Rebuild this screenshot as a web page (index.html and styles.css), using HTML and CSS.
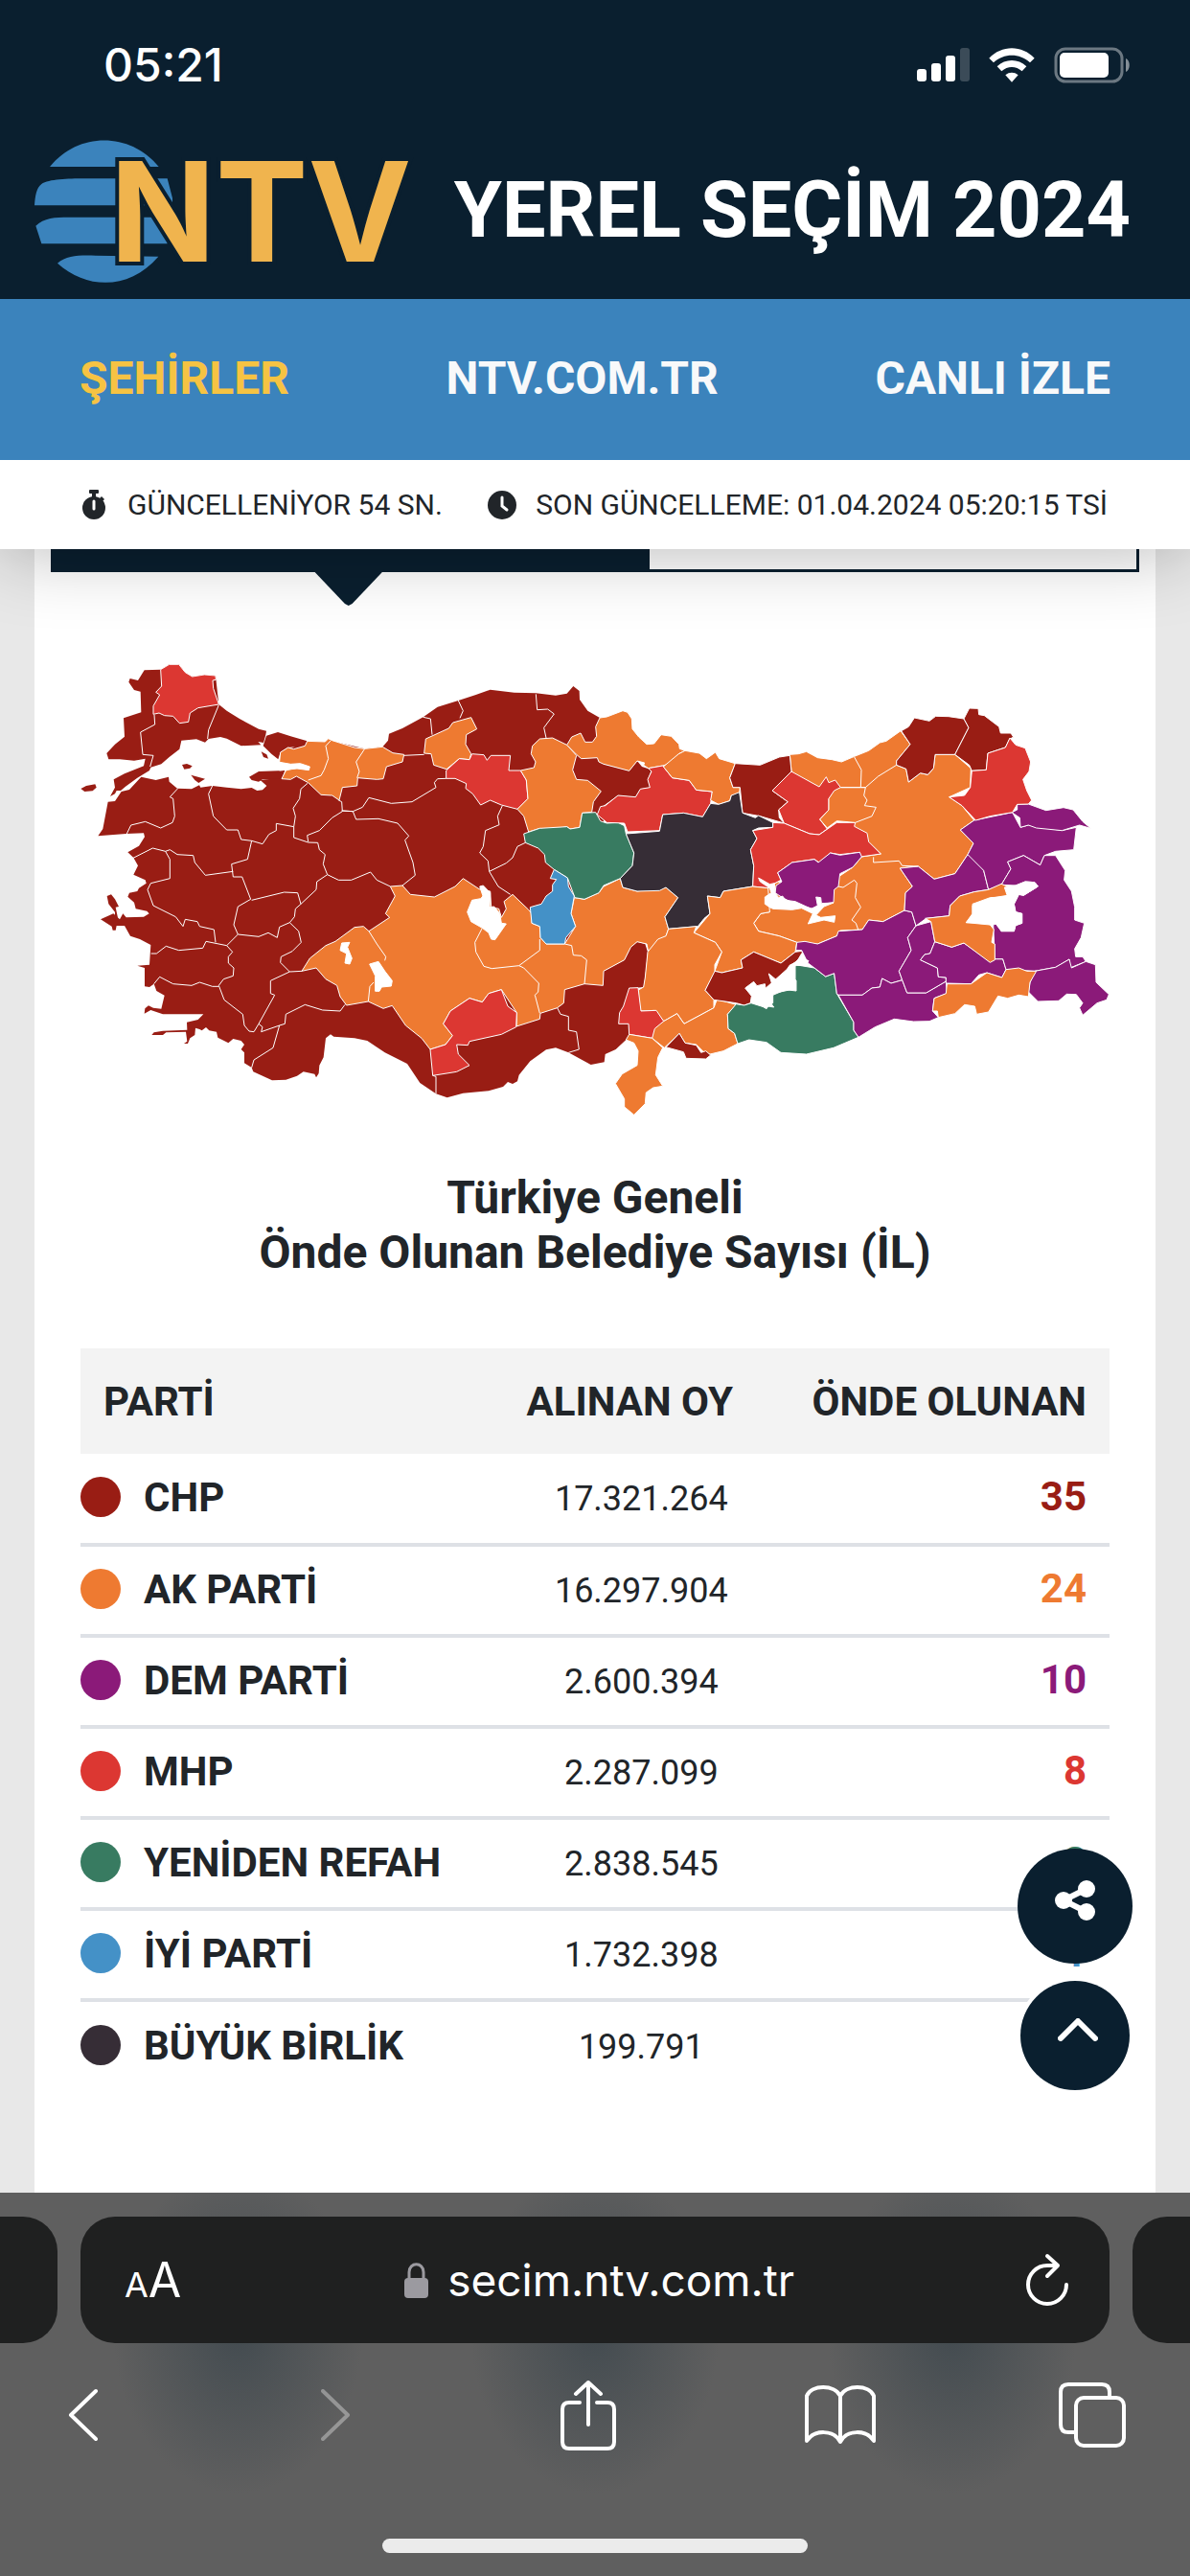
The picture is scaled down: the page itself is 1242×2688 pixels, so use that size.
FILE: index.html
```html
<!DOCTYPE html>
<html lang="tr">
<head>
    <meta charset="UTF-8">
    <meta name="viewport" content="width=device-width, initial-scale=1.0">
    <title>NTV Yerel Seçim 2024</title>
    <link rel="stylesheet" href="styles.css">
</head>
<body>

<header class="header">
    <div class="status">
        <span class="time">05:21</span>
        <div class="status-icons">
            <svg width="55" height="36" viewBox="0 0 55 36" fill="#fff">
                <rect x="0" y="22" width="10" height="13" rx="3"/>
                <rect x="15" y="16" width="10" height="19" rx="3"/>
                <rect x="30" y="8" width="10" height="27" rx="3"/>
                <rect x="45" y="0" width="10" height="35" rx="3" opacity=".2"/>
            </svg>
            <svg width="48" height="36" viewBox="0 0 144 108" fill="#fff">
                <path d="M1 32C40-10 104-10 143 32L129 46C97 16 47 16 15 46Z"/>
                <path d="M26 58C52 33 92 33 118 58L104 73C85 56 59 56 40 73Z"/>
                <path d="M52 85C64 75 80 75 92 85L72 107Z"/>
            </svg>
            <svg width="80" height="38" viewBox="0 0 80 38">
                <rect x="2" y="2" width="69" height="34" rx="10" fill="none" stroke="#fff" stroke-opacity=".4" stroke-width="3"/>
                <rect x="6" y="6" width="51" height="26" rx="5" fill="#fff"/>
                <path d="M75 12C80 14 80 24 75 26Z" fill="#fff" opacity=".5"/>
            </svg>
        </div>
    </div>
    <div class="brand">
        <a href="#" class="logo" aria-label="NTV">
            <svg viewBox="48 50 1170 444">
                <g fill="#3b83bc">
                    <path d="M96 134C185 24 347 24 437 134Z"/>
                    <path d="M48 255C50 225 54 200 70 188C100 168 190 171 250 171H464L480 232V255Z"/>
                    <path d="M70 375L52 319C80 290 125 292 170 292H420L471 346L464 375Z"/>
                    <path d="M120 436C150 410 190 411 240 412L436 415C345 520 215 520 120 436Z"/>
                </g>
                <text class="logo-text" x="284" y="432">NTV</text>
            </svg>
        </a>
        <h1 class="site-title">YEREL SEÇİM 2024</h1>
    </div>
</header>

<nav class="nav">
    <a href="#" class="active">ŞEHİRLER</a>
    <a href="#">NTV.COM.TR</a>
    <a href="#">CANLI İZLE</a>
</nav>

<div class="info">
    <span class="info-item">
        <svg width="30" height="32" viewBox="0 0 30 32" fill="#212529">
            <rect x="10" y="0" width="10" height="4" rx="1"/>
            <rect x="13" y="2" width="4" height="6"/>
            <path d="M23 7L26 10L24 12L21 9Z"/>
            <circle cx="15" cy="19" r="12"/>
            <path d="M15 12V20" stroke="#fff" stroke-width="3" stroke-linecap="round"/>
        </svg>
        GÜNCELLENİYOR 54 SN.
    </span>
    <span class="info-item">
        <svg width="30" height="30" viewBox="0 0 30 30">
            <circle cx="15" cy="15" r="15" fill="#212529"/>
            <path d="M15 7V16L20 20" fill="none" stroke="#fff" stroke-width="3" stroke-linecap="round"/>
        </svg>
        SON GÜNCELLEME: 01.04.2024 05:20:15 TSİ
    </span>
</div>

<main class="main">
    <div class="card">
        <div class="tabs">
            <span class="tab tab-active"></span>
            <span class="tab"></span>
        </div>

        <!-- Map of the provinces, filled with the colour of the leading party -->
        <svg class="map" viewBox="42 60 3222 1440" role="img" aria-label="Türkiye haritası">
            <g class="chp land">
                <path d="M193 125L197 114 222 120 242 88 293 86 320 70 350 70 370 95 392 108 430 102 465 105 475 195 500 215 540 240 600 272 624 278 622 290 615 315 598 312 607 322 545 325 500 302 480 297 443 303 432 314 405 304 358 308 352 335 320 360 295 382 262 392 258 402 220 425 183 452 168 465 155 465 150 475 135 483 150 455 146 430 180 412 240 388 245 365 210 371 165 367 130 367 124 348 150 320 180 296 177 238 232 220 230 155 210 150Z"/>
                <path d="M43 459L60 450 88 445 92 455 80 466 55 468Z"/>
                <path d="M360 384L375 381 392 388 385 395 367 398Z"/>
                <path d="M388 416L432 428 412 441 400 432Z"/>
                <path d="M608 343L625 352 630 365 615 360Z"/>
                <path d="M624 293L660 282 700 295 752 310 745 325 692 330 668 345 661 367 640 350 614 325Z"/>
                <path d="M570 422L600 405 682 402 672 430 612 430 600 437 578 432Z"/>
                <path d="M125 795L138 790 150 805 162 828 152 830 160 868 150 868 150 845 130 820Z"/>
                <path d="M128 500L150 498 170 468 195 462 232 422 278 432 318 422 320 437 345 458 390 460 414 448 418 455 455 450 500 455 545 460 578 456 595 465 612 463 625 450 605 432 640 428 672 428 690 400 668 370 668 345 752 312 840 312 932 334 988 328 1005 308 1008 287 1050 270 1115 235 1160 203 1225 183 1280 165 1325 149 1400 158 1468 160 1530 167 1565 161 1585 138 1604 153 1605 180 1630 215 1668 237 1680 382 1760 403 1785 372 1800 390 1830 400 1818 430 1825 455 1795 460 1780 485 1725 480 1680 512 1680 770 1680 1030 1745 995 1765 955 1785 938 1810 945 1818 970 1810 1050 1805 1080 1760 1085 1758 1190 1760 1230 1750 1245 1718 1275 1685 1290 1682 1315 1640 1323 1570 1285 1530 1270 1500 1276 1450 1312 1415 1355 1410 1375 1395 1383 1380 1377 1365 1392 1320 1405 1240 1412 1190 1426 1155 1414 1105 1380 1065 1320 995 1285 940 1248 900 1240 835 1235 825 1228 810 1240 803 1300 790 1325 788 1350 780 1363 775 1352 740 1345 720 1358 685 1370 642 1372 583 1345 578 1332 555 1318 555 1285 545 1275 555 1260 545 1248 520 1242 505 1255 472 1238 468 1220 445 1216 435 1206 422 1216 415 1212 402 1208 400 1230 385 1240 378 1257 366 1257 376 1250 372 1220 310 1222 300 1230 265 1230 272 1222 300 1217 376 1214 375 1190 410 1182 427 1165 300 1165 262 1152 242 1163 244 1147 255 1138 270 1145 295 1148 305 1106 280 1092 272 1070 258 1080 243 1078 243 1020 220 1013 258 1010 262 948 228 930 198 920 180 888 155 888 152 902 143 902 140 890 105 868 145 850 165 868 175 850 185 862 240 860 257 850 250 842 215 835 210 815 190 797 195 785 220 780 225 770 248 755 245 745 208 728 222 700 208 675 190 658 225 638 243 610 240 598 185 600 97 607 112 585Z"/>
            </g>

            <!-- West -->
            <path class="mhp" d="M293 86L320 70 350 70 370 95 392 108 430 102 465 105 466 118 456 120 458 145 475 195 410 206 385 222 380 250 352 254 332 232 305 230 288 222 270 226 270 200 290 165 278 157 296 138Z"/>
            <path class="akp" d="M668 345L692 330 710 335 745 325 752 310 808 312 818 302 830 308 900 330 932 334 988 328 1020 347 1055 352 1050 375 1000 390 990 428 970 430 910 425 908 450 862 455 852 495 830 480 795 478 755 440 718 420 700 430 672 428 685 402 700 398 665 375Z"/>

            <!-- Middle -->
            <g transform="translate(840 0)">
                <path class="akp" d="M283 303L355 270 368 252 425 236 443 272 410 290 408 320 425 350 420 368 388 365 348 398 308 385 300 350 278 348Z"/>
                <path class="mhp" d="M347 402L388 365 420 368 428 350 465 353 475 370 487 355 548 355 543 402 580 402 598 432 603 490 570 523 520 510 485 495 455 510 430 475 408 458 410 443 375 427 347 427Z"/>
                <path class="akp" d="M580 402L622 393 627 375 613 350 617 325 640 303 680 300 725 322 755 355 743 400 755 430 790 433 832 467 808 500 803 532 773 535 765 580 735 585 725 578 660 590 640 583 605 594 590 545 570 523 603 490 598 432Z"/>
                <path class="akp" d="M725 322L740 297 768 285 782 313 805 313 818 295 815 265 828 237 850 234 900 215 915 220 928 240 930 272 950 297 975 320 998 318 1020 290 1052 295 1076 320 1078 334 1095 340 1075 350 1055 378 1025 387 980 395 965 385 968 378 945 372 920 403 840 382 825 375 820 362 770 365 755 352Z"/>
                <path class="akp" d="M748 800L780 805 825 785 840 765 892 740 900 768 945 780 1035 768 1073 800 1032 860 1043 898 1032 930 1010 940 980 970 975 945 945 938 925 955 905 995 840 1030 838 1075 780 1070 718 1088 715 1130 695 1145 642 1162 640 1180 567 1203 568 1160 520 1088 480 1100 460 1127 420 1115 360 1155 338 1195 367 1232 345 1260 297 1275 270 1240 220 1200 178 1138 150 1147 103 1125 35 1137 15 1110 5 1075-30 1055-60 1020-105 1030-80 990-30 950 0 937 60 893 88 890 105 905 170 862 157 850 187 795 172 765 210 762 235 790 310 798 375 765 400 740 450 773 485 780 488 830 512 835 520 862 535 835 528 812 555 790 605 838 615 850 615 880 640 890 642 925 660 945 718 945 752 890 738 850Z"/>
                <path class="mhp" d="M297 1275L345 1260 367 1232 338 1195 360 1155 420 1115 460 1127 480 1100 520 1088 540 1140 568 1160 566 1205 520 1228 420 1250 415 1262 380 1260 385 1290 420 1325 380 1345 305 1357Z"/>
                <path class="yrp" d="M590 600L640 583 725 578 735 585 765 580 773 535 815 533 830 560 850 567 885 565 905 575 910 600 935 660 930 700 892 740 840 762 825 785 780 805 750 800 727 738 685 712 658 690 655 665 635 645 595 628Z"/>
                <path class="iyi" d="M685 712L727 738 730 765 748 795 738 850 752 890 722 925 718 945 660 945 642 925 640 890 615 880 610 830 645 820 660 795 680 780 680 760 692 743 673 740Z"/>
            </g>

            <!-- North and south east -->
            <g transform="translate(1680 0)">
                <path class="akp" d="M583 352L610 350 635 343 670 362 715 368 745 375 785 358 830 340 865 315 885 310 930 278 960 320 917 372 917 385 947 397 955 438 992 410 1015 415 1033 395 1038 352 1100 352 1150 395 1148 455 1082 485 1122 512 1160 558 1117 588 1158 630 1140 665 1100 725 1035 742 985 702 928 708 967 765 945 785 942 840 875 875 830 870 810 900 740 903 730 920 670 945 605 940 550 920 485 905 470 880 492 850 520 845 505 800 515 770 545 750 722 775 735 735 780 705 808 672 868 663 700 500 588 405Z"/>
                <path class="mhp" d="M185 387L215 425 268 433 290 463 340 468 335 505 310 547 250 535 185 540 175 590 75 594 65 567 10 565-20 540-10 515 5 512 45 480 100 485 115 460 145 455 138 430 150 405 140 395Z"/>
                <path class="akp" d="M235 350L255 340 300 348 322 365 350 345 362 365 412 380 395 425 405 455 427 455 425 475 400 480 395 497 360 508 335 495 340 468 290 463 268 433 215 425 187 390Z"/>
                <path class="chp" d="M412 380L490 385 550 360 583 355 588 405 528 465 577 500 548 525 550 550 565 567 490 545 435 535 427 455 405 455 395 425Z"/>
                <path class="bbp" d="M425 470L435 535 475 550 485 543 530 565 530 580 485 582 467 590 480 615 460 650 470 700 467 765 375 780 365 800 325 795 333 850 315 865 295 890 203 898 192 860 233 800 195 768 175 778 105 780 60 768 52 740 90 700 95 660 70 600 175 592 185 540 250 535 310 547 335 505 360 508 395 497 400 480Z"/>
                <path class="mhp" d="M588 405L675 453 697 422 705 440 725 432 742 455 705 490 705 525 677 555 700 585 675 603 645 600 565 567 548 525 577 500 528 465Z"/>
                <path class="mhp" d="M530 580L530 565 565 567 645 600 675 603 730 565 788 565 785 577 825 598 830 625 868 663 805 672 802 658 740 665 710 660 675 690 660 680 590 690 545 722 555 745 527 760 515 770 467 765 470 700 460 650 480 615 467 590Z"/>
                <path class="akp" d="M705 490L722 465 742 455 805 455 820 455 815 480 825 495 817 512 853 517 840 545 788 565 730 560 700 582 677 555 705 525Z"/>
                <path class="dem" d="M545 722L590 690 660 680 672 690 710 660 740 667 802 658 808 672 780 705 740 725 735 765 722 775 720 815 685 820 655 835 600 820 560 800 537 785 540 762 558 750Z"/>
                <path class="akp" d="M283 910L333 850 325 795 365 800 375 780 467 765 515 770 520 845 492 850 470 880 485 905 550 920 605 940 600 970 555 1005 470 970 430 995 435 1020 370 1035 348 1030 370 970 350 940Z"/>
                <path class="akp" d="M203 898L290 890 283 910 350 940 370 970 348 1010 348 1035 318 1090 345 1120 345 1145 252 1195 230 1163 188 1187 160 1153 115 1155 107 1090 125 1080 130 1050 138 970 170 930 195 920Z"/>
                <path class="mhp" d="M80 1083L108 1082 117 1155 165 1153 188 1187 152 1240 80 1228 78 1195 47 1195 50 1160 62 1140Z"/>
                <path class="akp" d="M188 1187L230 1163 252 1195 345 1145 355 1118 415 1135 388 1165 390 1210 410 1225 420 1257 375 1280 333 1290 315 1285 290 1260 255 1255 237 1225 190 1270 152 1240 160 1210Z"/>
                <path class="akp" d="M80 1228L152 1240 185 1270 170 1300 163 1355 185 1390 155 1395 133 1410 130 1445 95 1480 65 1455 65 1430 37 1382 58 1352 105 1325 108 1280 95 1255 70 1245Z"/>
                <path class="chp" d="M195 1268L237 1225 255 1255 290 1262 305 1285 320 1280 335 1293 320 1305 258 1303 250 1283Z"/>
                <path class="chp" d="M348 1030L370 1035 435 1020 430 995 470 970 555 1005 600 970 622 967 620 985 590 1010 500 1090 460 1130 440 1137 415 1130 345 1120 318 1090Z"/>
                <path class="yrp" d="M415 1133L440 1137 462 1130 510 1145 530 1130 530 1100 600 1085 600 1010 660 1020 695 1047 722 1037 730 1100 783 1190 783 1215 798 1237 720 1270 635 1290 555 1285 510 1253 455 1245 420 1257 410 1225 390 1210 388 1165Z"/>
            </g>

            <!-- Far east -->
            <g transform="translate(2490 0)">
                <path class="dem" d="M-205 940L-180 937-140 945-80 920-75 905 0 900 20 870 65 875 132 840 155 845 168 888 142 925 153 965 115 1030 125 1058 90 1068 62 1053 55 1080 30 1083 0 1105-75 1105-80 1100-88 1037-115 1047-150 1020-170 1005-190 965-208 965Z"/>
                <path class="dem" d="M-75 1105L0 1105 30 1083 55 1080 62 1053 90 1068 125 1058 140 1098 200 1098 262 1062 265 1100 225 1115 220 1155 238 1175 210 1187 160 1188 100 1180 40 1205-12 1237-27 1215-27 1190Z"/>
                <path class="dem" d="M168 888L215 875 227 938 212 975 195 978 182 995 235 1020 238 1048 262 1050 262 1062 200 1098 140 1098 125 1058 115 1030 153 965 142 925Z"/>
                <path class="dem" d="M227 938L280 955 318 942 400 1000 415 992 440 992 450 1025 437 1050 390 1035 365 1042 340 1070 262 1068 262 1050 238 1048 235 1020 182 995 195 978 212 975Z"/>
                <path class="dem" d="M118 708L175 702 225 742 290 725 330 665 350 672 380 715 395 775 350 782 305 795 275 825 272 857 200 865 168 888 155 845 132 840 135 785 157 765Z"/>
                <path class="dem" d="M307 588L350 558 470 533 495 580 520 573 625 590 670 580 662 650 605 655 570 668 557 698 505 668 455 688 465 710 435 760 395 775 380 715 330 665 348 630Z"/>
                <path class="dem" d="M485 508L520 507 575 527 630 518 660 525 690 562 715 583 680 573 625 590 545 582 520 573 495 580 493 550 468 533 485 525Z"/>
                <path class="dem" d="M455 688L505 668 557 698 570 668 605 668 635 715 632 745 655 780 665 830 665 870 695 880 685 925 665 960 668 985 690 985 700 1000 650 1020 648 993 605 1018 540 1030 450 1025 440 992 415 992 410 885 425 880 435 905 475 905 480 887 500 880 500 850 480 845 475 820 490 790 505 793 550 765 540 752 510 750 480 762 435 760 465 710Z"/>
                <path class="dem" d="M540 1030L605 1018 648 993 655 1020 700 1000 730 1010 732 1065 772 1103 765 1120 735 1130 690 1168 680 1145 690 1130 670 1103 640 1102 615 1123 550 1125 520 1095 525 1065Z"/>
                <path class="akp" d="M265 1070L340 1070 390 1035 437 1050 450 1025 490 1020 515 1030 545 1030 525 1065 520 1110 490 1105 455 1115 425 1108 395 1158 358 1165 352 1140 320 1135 290 1163 238 1175 235 1155 220 1155 225 1115 262 1100Z"/>
                <path class="akp" d="M197 865L272 857 275 825 305 795 350 782 395 775 435 757 455 765 460 792 400 802 345 825 345 855 325 878 400 885 412 900 405 940 415 945 415 995 400 1003 318 942 280 955 227 938 215 875Z"/>
                <path class="chp" d="M122 278L145 265 163 237 210 247 230 232 270 233 318 240 333 268 290 352 228 352 223 395 205 415 182 410 145 438 137 397 107 385 107 372 150 320Z"/>
                <path class="chp" d="M318 240L335 207 363 208 365 227 382 230 428 265 433 285 465 285 473 297 460 305 448 330 393 348 388 400 343 403 335 385 290 352 333 268Z"/>
                <path class="mhp" d="M343 403L388 400 393 348 448 330 462 300 480 322 510 332 527 375 522 405 503 430 515 465 530 495 520 507 485 508 470 533 400 545 355 558 312 512 272 485 320 480 338 455Z"/>
            </g>

            <g class="borders">
                <path d="M273 228L275 258 230 282 237 352 270 355 260 390M475 197L443 275 440 303"/>
                <path d="M187 600L200 573 245 562 293 582 330 565 337 545 332 490 322 485 347 458M455 450L443 475 458 545 500 588 535 588 545 618 578 622 612 632 632 602 655 590 655 568 710 578 710 612 755 627 785 628 790 650 808 665 802 695 815 728 850 745 890 745 950 720 970 745 1012 765"/>
                <path d="M710 578L715 545 708 520 728 490 732 460 753 442M755 625L752 605 790 590 830 550 862 530 860 500 850 495M862 528L895 530"/>
                <path d="M578 622L565 680 515 695 520 735 548 735 575 805 535 828 522 885 535 915 500 950 435 937 425 958 350 965 310 952 280 975 263 975"/>
                <path d="M205 677L268 645 308 655 322 650 345 665 395 668 400 690 433 730 520 718M308 655L322 680 322 740 262 755 252 775 270 825 340 860 363 890 370 868 408 875 415 890 460 900 465 940"/>
                <path d="M578 808L680 783 722 785 732 820 780 775 782 750 815 728M535 915L600 922 630 910 658 925 665 892 697 878 712 860 715 835 732 820"/>
                <path d="M697 878L725 905 733 940 705 968 670 985 668 1003 697 1032 735 1030M697 1032L637 1060 637 1100 650 1105 600 1195 585 1220 570 1218 555 1200 550 1165 492 1120 475 1075 490 1055 520 1045 522 1020 505 1005 505 985 518 970 500 950"/>
                <path d="M475 1078L455 1078 415 1065 390 1075 332 1070 290 1048 272 1070M600 1195L612 1205 608 1220 665 1200 645 1270 585 1308 578 1332M665 1200L682 1195 685 1165 745 1135 800 1152 855 1155 870 1135"/>
                <g transform="translate(840 0)">
                    <path d="M-14 308L-30 325-22 365-35 400-45 418-85 432M92 334L65 375 75 405 68 425M275 235L298 240 303 290M385 183L400 215 390 238M628 163L632 212 665 210 685 225 653 268 660 300M215 355L278 352"/>
                    <path d="M20 528L55 530 85 517 105 487 175 505 240 500 315 455 310 440 320 428 347 427M55 530L65 555 135 553 195 567 230 607 218 620 243 690 250 730 210 762"/>
                    <path d="M523 512L508 545 513 572 470 590 463 640 452 660 478 685 482 718 510 765 548 790M482 718L535 692 555 675 570 640 595 628M695 1145L705 1165 730 1172 730 1215 755 1220 763 1275 730 1285M305 1357L315 1360 315 1414"/>
                    <path d="M105 905L130 945 158 985 155 997M120 1065L108 1078 103 1125M460 895L437 940 440 970 465 1015 490 1022 575 1013 640 965 640 930M575 1013L590 1020 637 1068 635 1095 625 1105 640 1162M718 945L740 950 745 980 770 982 787 995 780 1070"/>
                </g>
                <g transform="translate(1680 0)">
                    <path d="M785 360L807 400 805 455 743 455M805 455L820 455 860 420 917 385M845 673L845 690 925 685 935 700 985 702M735 765L750 768 785 745 793 755 788 800 805 830 777 870 790 880 797 900"/>
                </g>
            </g>

            <!-- Lakes, dams and the gulf of Izmit -->
            <g class="water">
                <path d="M660 375L700 382 730 380 760 390 757 401 720 396 665 402Z"/>
                <g transform="translate(840 0)">
                    <path d="M452 765L463 762 485 785 483 830 497 828 515 850 520 880 535 882 500 932 488 930 480 910 460 895 425 875 413 845 428 808 455 803 462 795Z"/>
                    <path d="M20 942L45 940 38 955 52 990 45 1008 30 1005 35 975 15 965Z"/>
                    <path d="M107 1008L135 1000 155 1030 178 1060 175 1077 145 1080 138 1093 125 1093 125 1045Z"/>
                </g>
                <g transform="translate(1680 0)">
                    <path d="M443 1083L470 1063 480 1076 505 1070 508 1090 527 1070 517 1038 550 1065 582 1012 605 1000 620 975 625 990 642 998 630 1012 600 1012 590 1045 603 1060 603 1092 570 1088 530 1105 520 1125 533 1143 515 1140 510 1148 480 1130 460 1128 463 1108Z"/>
                    <path d="M485 738L520 758 535 755 537 785 548 800 560 795 570 808 600 812 650 835 670 825 665 798 680 800 682 818 720 816 690 828 665 855 680 862 725 857 722 877 690 870 640 882 655 850 620 833 590 838 530 835 520 830 505 820 505 798 525 785 520 770 490 750Z"/>
                </g>
                <g transform="translate(2490 0)">
                    <path d="M345 820L400 800 455 797 445 768 480 762 510 750 540 752 550 765 505 793 490 790 475 820 480 845 500 850 500 880 480 887 475 905 435 905 415 878 400 885 385 878 325 878 345 850Z"/>
                </g>
            </g>
        </svg>

        <h2 class="title">Türkiye Geneli<br>Önde Olunan Belediye Sayısı (İL)</h2>

        <table class="results">
            <thead>
                <tr>
                    <th class="party">PARTİ</th>
                    <th class="votes">ALINAN OY</th>
                    <th class="lead">ÖNDE OLUNAN</th>
                </tr>
            </thead>
            <tbody>
                <tr class="row-chp">
                    <td class="party"><span class="dot"></span>CHP</td>
                    <td class="votes">17.321.264</td>
                    <td class="lead">35</td>
                </tr>
                <tr class="row-akp">
                    <td class="party"><span class="dot"></span>AK PARTİ</td>
                    <td class="votes">16.297.904</td>
                    <td class="lead">24</td>
                </tr>
                <tr class="row-dem">
                    <td class="party"><span class="dot"></span>DEM PARTİ</td>
                    <td class="votes">2.600.394</td>
                    <td class="lead">10</td>
                </tr>
                <tr class="row-mhp">
                    <td class="party"><span class="dot"></span>MHP</td>
                    <td class="votes">2.287.099</td>
                    <td class="lead">8</td>
                </tr>
                <tr class="row-yrp">
                    <td class="party"><span class="dot"></span>YENİDEN REFAH</td>
                    <td class="votes">2.838.545</td>
                    <td class="lead">2</td>
                </tr>
                <tr class="row-iyi">
                    <td class="party"><span class="dot"></span>İYİ PARTİ</td>
                    <td class="votes">1.732.398</td>
                    <td class="lead">1</td>
                </tr>
                <tr class="row-bbp">
                    <td class="party"><span class="dot"></span>BÜYÜK BİRLİK</td>
                    <td class="votes">199.791</td>
                    <td class="lead">1</td>
                </tr>
            </tbody>
        </table>
    </div>

    <div class="floating">
        <button class="round share" aria-label="Paylaş">
            <svg width="42" height="42" viewBox="0 0 42 42" fill="#fff">
                <path d="M33 9L9 21L33 33" fill="none" stroke="#fff" stroke-width="6"/>
                <circle cx="33" cy="9" r="9"/>
                <circle cx="9" cy="21" r="9"/>
                <circle cx="33" cy="33" r="9"/>
            </svg>
        </button>
        <button class="round up" aria-label="Yukarı çık">
            <svg width="42" height="24" viewBox="0 0 42 24">
                <path d="M3 21L21 3L39 21" fill="none" stroke="#fff" stroke-width="6" stroke-linecap="round" stroke-linejoin="round"/>
            </svg>
        </button>
    </div>
</main>

<footer class="browser">
    <div class="address-row">
        <span class="side side-left"></span>
        <div class="address">
            <button class="text-size" aria-label="Metin boyutu"><small>A</small>A</button>
            <span class="url">
                <svg width="25" height="37" viewBox="0 0 25 37">
                    <path d="M5 18V10C5-1 20-1 20 10V18" fill="none" stroke="#9b9aa0" stroke-width="3"/>
                    <rect x="0" y="16" width="25" height="21" rx="4" fill="#9b9aa0"/>
                </svg>
                secim.ntv.com.tr
            </span>
            <button aria-label="Yenile">
                <svg width="46" height="56" viewBox="0 0 46 56" fill="none" stroke="#fff" stroke-width="4" stroke-linecap="round" stroke-linejoin="round">
                    <path d="M43 33A20 20 0 1 1 23 13H34M23 3L34 13L23 24"/>
                </svg>
            </button>
        </div>
        <span class="side side-right"></span>
    </div>
    <div class="toolbar">
        <button aria-label="Geri">
            <svg width="32" height="56" viewBox="0 0 32 56"><path d="M29 3L3 28L29 53"/></svg>
        </button>
        <button class="off" aria-label="İleri" disabled>
            <svg width="32" height="56" viewBox="0 0 32 56"><path d="M3 3L29 28L3 53"/></svg>
        </button>
        <button aria-label="Paylaş">
            <svg width="58" height="74" viewBox="0 0 58 74"><path d="M20 24H9Q2 24 2 31V65Q2 72 9 72H49Q56 72 56 65V31Q56 24 49 24H38M29 47V3M16 15L29 3L42 15"/></svg>
        </button>
        <button aria-label="Yer imleri">
            <svg width="74" height="62" viewBox="0 0 74 62"><path d="M37 59V11C31-1 7-1 2 11V58C10 46 30 46 37 59C44 46 64 46 72 58V11C67-1 43-1 37 11"/></svg>
        </button>
        <button aria-label="Sekmeler">
            <svg width="70" height="68" viewBox="0 0 70 68"><path d="M17 52H10Q2 52 2 44V10Q2 2 10 2H45Q53 2 53 10V15"/><rect x="18" y="16" width="50" height="50" rx="8"/></svg>
        </button>
    </div>
    <div class="home-bar"></div>
</footer>

</body>
</html>
```
FILE: styles.css
```css
/* Party colours, used by the map and the table */
:root {
    --chp: #991d14;
    --akp: #ee7a31;
    --dem: #8b1a79;
    --mhp: #dc3732;
    --yrp: #387b61;
    --iyi: #4491c7;
    --bbp: #362d36;
    --navy: #0a1f2f;
}

* {
    box-sizing: border-box;
}

body {
    margin: 0;
    min-height: 100vh;
    display: flex;
    flex-direction: column;
    background: #e8e8e8;
    color: #212529;
    font-family: Roboto, "Liberation Sans", sans-serif;
}

svg {
    display: block;
}

a {
    color: inherit;
    text-decoration: none;
}

button {
    padding: 0;
    border: none;
    background: none;
    color: #fff;
    cursor: pointer;
}

/* Status bar and logo */
.header {
    background: var(--navy);
    color: #fff;
    padding-bottom: 16px;
}

.status {
    display: flex;
    align-items: center;
    justify-content: space-between;
    height: 136px;
    padding: 0 62px 0 108px;
}

.time {
    font: 500 48px/1 Inter, sans-serif;
}

.status-icons {
    display: flex;
    align-items: center;
    gap: 20px;
}

.brand {
    display: flex;
    align-items: center;
    justify-content: space-between;
    height: 160px;
    padding: 8px 62px 0 36px;
}

.logo svg {
    width: 390px;
    overflow: visible;
}

.logo-text {
    font: 700 434px Inter, sans-serif;
    fill: #f0b44e;
    stroke: var(--navy);
    stroke-width: 24px;
    paint-order: stroke;
}

.site-title {
    margin: 0;
    font-size: 81px;
    font-weight: 700;
    line-height: 96px;
}

.nav {
    display: flex;
    align-items: center;
    justify-content: space-between;
    height: 168px;
    padding: 0 83px 4px;
    background: #3b83bc;
    color: #f8f9fa;
    font-size: 48px;
    font-weight: 700;
    position: relative;
    z-index: 2;
}

.nav .active {
    color: #f6c343;
}

/* Update info under the menu */
.info {
    display: flex;
    align-items: center;
    justify-content: space-between;
    height: 93px;
    padding: 0 86px 0 83px;
    background: #fff;
    font-size: 30px;
    box-shadow: 0 0 80px rgba(0, 0, 0, 0.3);
    position: relative;
    z-index: 1;
}

.info-item {
    display: flex;
    align-items: center;
    gap: 20px;
}

.main {
    flex: 1;
    display: flex;
    flex-direction: column;
    padding: 0 36px;
}

.card {
    flex: 1;
    padding: 0 48px;
    background: #fff;
}

.tabs {
    display: flex;
    height: 24px;
    margin: 0 -31px 93px;
}

.tab {
    flex: 45;
    border: solid var(--navy);
    border-width: 0 3px 3px 0;
}

.tab-active {
    flex: 55;
    background: var(--navy);
    position: relative;
}

/* Arrow that hangs below the open tab */
.tab-active::after {
    content: "";
    position: absolute;
    top: 100%;
    left: 50%;
    width: 76px;
    height: 38px;
    margin-left: -38px;
    background: var(--navy);
    clip-path: polygon(0 0, 100% 0, 55% 95%, 50% 100%, 45% 95%);
}

.map {
    width: 100%;
    overflow: visible;
}

.map path {
    stroke: #fff;
    stroke-width: 3px;
    stroke-linejoin: round;
}

.map .land path {
    stroke: none;
}

.map .chp {
    fill: var(--chp);
}

.map .akp {
    fill: var(--akp);
}

.map .dem {
    fill: var(--dem);
}

.map .mhp {
    fill: var(--mhp);
}

.map .yrp {
    fill: var(--yrp);
}

.map .iyi {
    fill: var(--iyi);
}

.map .bbp {
    fill: var(--bbp);
}

.map .borders {
    fill: none;
}

.map .water {
    fill: #fff;
}

.title {
    margin: 51px 0 72px;
    font-size: 48px;
    font-weight: 700;
    line-height: 57px;
    text-align: center;
}

/* Results table */
.results {
    width: 100%;
    border-collapse: collapse;
    table-layout: fixed;
    font-size: 42px;
    font-weight: 700;
}

.results th {
    height: 110px;
    padding: 0 24px;
    background: #f3f3f3;
    font-weight: 700;
}

.results td {
    height: 95px;
    padding: 0 0 2px;
    border-bottom: 4px solid #dee1e6;
}

.results tr:last-child td {
    border-bottom: none;
}

.results .party {
    width: 42%;
    text-align: left;
}

.results .votes {
    text-align: center;
    width: 25%;
    padding-left: 0;
}

.results td.votes {
    padding-bottom: 0;
    font-size: 36px;
    font-weight: 400;
}

.results .lead {
    padding-right: 24px;
    padding-left: 0;
    text-align: right;
}

.results td.lead {
    padding-bottom: 4px;
}

.dot {
    display: inline-block;
    width: 42px;
    height: 42px;
    margin-right: 24px;
    border-radius: 50%;
    vertical-align: -6px;
}

.row-chp .dot { background: var(--chp); }
.row-akp .dot { background: var(--akp); }
.row-dem .dot { background: var(--dem); }
.row-mhp .dot { background: var(--mhp); }
.row-yrp .dot { background: var(--yrp); }
.row-iyi .dot { background: var(--iyi); }
.row-bbp .dot { background: var(--bbp); }

.row-chp .lead { color: var(--chp); }
.row-akp .lead { color: var(--akp); }
.row-dem .lead { color: var(--dem); }
.row-mhp .lead { color: var(--mhp); }
.row-yrp .lead { color: var(--yrp); }
.row-iyi .lead { color: var(--iyi); }
.row-bbp .lead { color: var(--bbp); }

/* Share and back to top buttons over the page */
.floating {
    position: fixed;
    right: 60px;
    bottom: 507px;
    display: flex;
    flex-direction: column;
    align-items: center;
    gap: 18px;
}

.round {
    display: flex;
    align-items: center;
    justify-content: center;
    border-radius: 50%;
    background: var(--navy);
}

.share {
    width: 120px;
    height: 120px;
    padding-bottom: 12px;
}

.up {
    width: 114px;
    height: 114px;
    padding: 0 0 12px 6px;
    box-shadow: 0 0 0 4px #fff;
}

/* Browser bar */
.browser {
    height: 400px;
    padding-top: 25px;
    display: flex;
    flex-direction: column;
    background:
        radial-gradient(ellipse 130px 170px at 20% 36%, #434b50, transparent),
        radial-gradient(ellipse 130px 170px at 50% 36%, #434b50, transparent),
        radial-gradient(ellipse 130px 170px at 80% 36%, #434b50, transparent),
        #5f5f5f;
}

.address-row {
    display: flex;
    gap: 24px;
}

.side,
.address {
    height: 132px;
    background: #1f2020;
}

.side {
    width: 60px;
}

.side-left {
    border-radius: 0 36px 36px 0;
}

.side-right {
    border-radius: 36px 0 0 36px;
}

.address {
    flex: 1;
    display: flex;
    align-items: center;
    justify-content: space-between;
    padding: 0 42px 0 46px;
    border-radius: 36px;
    color: #fff;
    font: 400 46px/1 Inter, sans-serif;
}

.text-size {
    font: 400 50px/1 Inter, sans-serif;
}

.text-size small {
    font-size: 36px;
}

.url {
    display: flex;
    align-items: center;
    gap: 20px;
    margin-right: 8px;
}

.toolbar {
    display: flex;
    align-items: center;
    justify-content: space-between;
    height: 150px;
    padding: 0 65px 0 50px;
}

.toolbar button {
    display: flex;
    justify-content: center;
    width: 74px;
}

.toolbar svg {
    fill: none;
    stroke: #fff;
    stroke-width: 4px;
    stroke-linecap: round;
    stroke-linejoin: round;
}

.off {
    opacity: 0.35;
}

.home-bar {
    width: 444px;
    height: 15px;
    margin: auto auto 24px;
    border-radius: 8px;
    background: #ebebeb;
}
```
